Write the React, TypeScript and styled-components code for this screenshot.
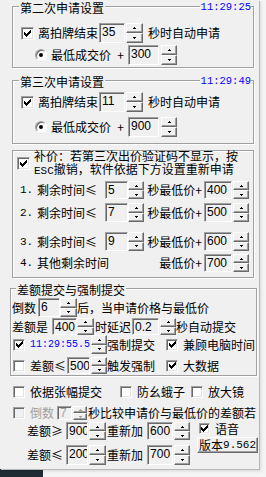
import React from "react";
import styled, { createGlobalStyle } from "styled-components";

const GlobalStyle = createGlobalStyle`
  html, body {
    margin: 0;
    padding: 0;
  }
  body {
    width: 266px;
    height: 477px;
    overflow: hidden;
    background: #f4f4f4;
    color: #000;
    font-family: "Noto Sans CJK SC", "Noto Sans", sans-serif;
    font-size: 12px;
  }
`;

const Screen = styled.div`
  width: 266px;
  height: 477px;
  display: flex;
  flex-direction: column;
`;

const TopArea = styled.div`
  display: flex;
  height: 469px;
`;

const Window = styled.div`
  position: relative;
  z-index: 1;
  width: 259px;
  height: 469px;
  background: #f0f0f0;
  box-shadow: 1px 1px 0 #b9b9b9, 2px 2px 3px rgba(0, 0, 0, 0.12);
  display: flex;
  flex-direction: column;
`;

const Backdrop = styled.div`
  flex: 1;
  background: #f4f4f4;
`;

const BottomArea = styled.div`
  flex: 1;
  display: flex;
`;

const Taskbar = styled.div`
  width: 43px;
  background: #1f2c34;
`;

const Group = styled.div<{ $mt: number; $ml: number; $mr: number; $pb: number }>`
  margin: ${p => p.$mt}px ${p => p.$mr}px 0 ${p => p.$ml}px;
  padding-bottom: ${p => p.$pb}px;
  border: 1px solid #a0a0a0;
  box-shadow: inset 1px 1px 0 #fff, 1px 1px 0 #fff;
  display: flex;
  flex-direction: column;
`;

// legend strip: sits on the top border line
const GroupHeader = styled.div<{ $ml: number }>`
  display: flex;
  align-items: center;
  height: 13px;
  margin: -6px 2px 0 ${p => p.$ml}px;
`;

const GroupTitle = styled.span`
  background: #f0f0f0;
  padding: 0 1px;
  line-height: 13px;
  white-space: nowrap;
`;

const HeaderClock = styled.span`
  margin-left: auto;
  padding-left: 1px;
  background: #f0f0f0;
  color: #0000ff;
  font-family: "Liberation Mono", monospace;
  font-size: 10.5px;
  line-height: 13px;
`;

const Row = styled.div<{ $mt?: number; $h: number; $pl?: number }>`
  display: flex;
  align-items: center;
  height: ${p => p.$h}px;
  margin-top: ${p => p.$mt ?? 0}px;
  padding-left: ${p => p.$pl ?? 0}px;
`;

const Text = styled.span<{ $ml?: number; $disabled?: boolean }>`
  margin-left: ${p => p.$ml ?? 0}px;
  line-height: 14px;
  white-space: nowrap;
  color: ${p => (p.$disabled ? "#a0a0a0" : "#000")};
`;

const Mono = styled.span`
  font-family: "Liberation Mono", monospace;
  font-size: 11px;
  line-height: 1;
`;

const Plus = styled.span<{ $ml: number }>`
  width: 11px;
  margin-left: ${p => p.$ml}px;
  text-align: center;
  line-height: 14px;
`;

const Clock = styled.span<{ $ml: number }>`
  margin-left: ${p => p.$ml}px;
  color: #0000ff;
  font-family: "Liberation Mono", monospace;
  font-size: 10px;
  line-height: 14px;
`;

/* classic sunken check box */
const CheckFrame = styled.span<{ $size: number; $ml: number; $disabled?: boolean }>`
  flex: none;
  width: ${p => p.$size}px;
  height: ${p => p.$size}px;
  margin-left: ${p => p.$ml}px;
  box-sizing: border-box;
  border: 1px solid;
  border-color: #a0a0a0 #fff #fff #a0a0a0;
  box-shadow: inset 1px 1px 0 #696969, inset -1px -1px 0 #e3e3e3;
  background: ${p => (p.$disabled ? "#f0f0f0" : "#fff")};
  display: inline-flex;
  align-items: center;
  justify-content: center;
`;

const CHECK_PATH =
  "M6 0h1v1h-1z M5 1h2v1h-2z M0 2h1v1h-1z M4 2h3v1h-3z M0 3h2v1h-2z M3 3h3v1h-3z M0 4h5v1h-5z M1 5h3v1h-3z M2 6h1v1h-1z";

const CheckBox = ({
  checked,
  size = 12,
  ml = 0,
  disabled,
}: {
  checked?: boolean;
  size?: number;
  ml?: number;
  disabled?: boolean;
}) => (
  <CheckFrame $size={size} $ml={ml} $disabled={disabled}>
    {checked && (
      <svg width="7" height="7" viewBox="0 0 7 7" shapeRendering="crispEdges">
        <path d={CHECK_PATH} fill="#000" />
      </svg>
    )}
  </CheckFrame>
);

const RadioFrame = styled.span`
  flex: none;
  width: 12px;
  height: 12px;
  box-sizing: border-box;
  border-radius: 50%;
  border: 1px solid;
  border-color: #a0a0a0 #fff #fff #a0a0a0;
  box-shadow: inset 1px 1px 0 #696969;
  background: #fff;
  display: inline-flex;
  align-items: center;
  justify-content: center;
`;

const RadioDot = styled.span`
  width: 4px;
  height: 4px;
  border-radius: 50%;
  background: #000;
`;

/* spin edit: sunken number box + up/down buttons */
const SpinWrap = styled.div<{ $ml: number; $h: number; $gap: number }>`
  display: flex;
  flex: none;
  height: ${p => p.$h}px;
  margin-left: ${p => p.$ml}px;
  gap: ${p => p.$gap}px;
`;

const NumBox = styled.div<{ $w: number; $compact?: boolean; $disabled?: boolean }>`
  width: ${p => p.$w}px;
  height: 100%;
  box-sizing: border-box;
  border: 1px solid;
  border-color: #a0a0a0 #fff #fff #a0a0a0;
  box-shadow: inset 1px 1px 0 #696969;
  background: #f0f0f0;
  padding: ${p => (p.$compact ? "0 0 0 2px" : "1px 0 0 2px")};
  font-family: "Liberation Sans", Arial, sans-serif;
  font-size: 12px;
  line-height: ${p => (p.$compact ? 12 : 14)}px;
  color: ${p => (p.$disabled ? "#a0a0a0" : "#000")};
  overflow: hidden;
  white-space: nowrap;
`;

const SpinButtons = styled.div<{ $w: number }>`
  width: ${p => p.$w}px;
  height: 100%;
  display: flex;
  flex-direction: column;
`;

const SpinButton = styled.div`
  flex: 1;
  box-sizing: border-box;
  border: 1px solid;
  border-color: #fff #696969 #696969 #fff;
  box-shadow: inset -1px -1px 0 #a0a0a0;
  background: #f0f0f0;
  display: flex;
  align-items: center;
  justify-content: center;
`;

const Arrow = ({ down, color }: { down?: boolean; color: string }) => (
  <svg width="3" height="2" viewBox="0 0 3 2" shapeRendering="crispEdges">
    <path d={down ? "M0 0h3v1H0z M1 1h1v1H1z" : "M1 0h1v1H1z M0 1h3v1H0z"} fill={color} />
  </svg>
);

type SpinProps = {
  value?: string;
  w?: number;
  h: number;
  bw?: number;
  gap?: number;
  ml?: number;
  disabled?: boolean;
};

const Spin = ({ value, w = 0, h, bw = 16, gap = 1, ml = 0, disabled }: SpinProps) => {
  const arrow = disabled ? "#a0a0a0" : "#000";
  return (
    <SpinWrap $ml={ml} $h={h} $gap={gap}>
      {value !== undefined && (
        <NumBox $w={w} $compact={h < 16} $disabled={disabled}>
          {value}
        </NumBox>
      )}
      <SpinButtons $w={bw}>
        <SpinButton>
          <Arrow color={arrow} />
        </SpinButton>
        <SpinButton>
          <Arrow down color={arrow} />
        </SpinButton>
      </SpinButtons>
    </SpinWrap>
  );
};

/* 补价 group */
const NoticeRow = styled.div`
  display: flex;
  align-items: center;
  height: 25px;
  padding-left: 4px;
`;

const Notice = styled.div`
  margin-left: 4px;
  line-height: 12.5px;
  white-space: nowrap;
`;

const TierRow = styled.div<{ $mt: number; $h: number }>`
  display: grid;
  grid-template-columns: 17px 68px 39px 58px 47px;
  align-items: center;
  height: ${p => p.$h}px;
  margin-top: ${p => p.$mt}px;
  padding-left: 7px;
`;

const TierNo = styled.span`
  font-family: "Liberation Mono", monospace;
  font-size: 11px;
  line-height: 14px;
`;

const TierLabel = styled.span<{ $span?: number }>`
  grid-column: span ${p => p.$span ?? 1};
  line-height: 14px;
  white-space: nowrap;
`;

const PriceLabel = styled.span`
  grid-column: 4;
  text-align: right;
  line-height: 14px;
  white-space: nowrap;
`;

/* bottom block */
const BottomBlock = styled.div`
  display: flex;
  margin-top: 2px;
  padding-left: 27px;
`;

const AdjustColumn = styled.div`
  display: flex;
  flex-direction: column;
`;

const SideColumn = styled.div`
  display: flex;
  flex-direction: column;
  margin-left: 7px;
`;

const VoiceRow = styled.div`
  display: flex;
  align-items: center;
  height: 11px;
  margin-top: 1px;
`;

const VersionButton = styled.div`
  width: 61px;
  height: 16px;
  margin-top: 3px;
  box-sizing: border-box;
  border: 1px solid;
  border-color: #fff #696969 #696969 #fff;
  box-shadow: inset -1px -1px 0 #a0a0a0;
  background: #f0f0f0;
  display: flex;
  align-items: center;
  justify-content: center;
  line-height: 14px;
  white-space: nowrap;
`;

const BidSettings = ({
  title,
  clock,
  seconds,
  plus,
  mt,
  firstMt,
  secondMt,
  pb,
}: {
  title: string;
  clock: string;
  seconds: string;
  plus: string;
  mt: number;
  firstMt: number;
  secondMt: number;
  pb: number;
}) => (
  <Group $mt={mt} $ml={12} $mr={5} $pb={pb}>
    <GroupHeader $ml={6}>
      <GroupTitle>{title}</GroupTitle>
      <HeaderClock>{clock}</HeaderClock>
    </GroupHeader>
    <Row $mt={firstMt} $h={20} $pl={8}>
      <CheckBox checked size={13} />
      <Text $ml={4}>离拍牌结束</Text>
      <Spin value={seconds} w={26} h={20} bw={17} ml={1} />
      <Text $ml={5}>秒时自动申请</Text>
    </Row>
    <Row $mt={secondMt} $h={20} $pl={22}>
      <RadioFrame>
        <RadioDot />
      </RadioFrame>
      <Text $ml={4}>最低成交价</Text>
      <Plus $ml={4}>+</Plus>
      <Spin value={plus} w={31} h={20} bw={16} gap={2} ml={2} />
    </Row>
  </Group>
);

const tiers = [
  { no: "1.", secs: "5", price: "400", mt: 5, h: 18 },
  { no: "2.", secs: "7", price: "500", mt: 4, h: 19 },
  { no: "3.", secs: "9", price: "600", mt: 10, h: 19 },
];

export default function App() {
  return (
    <>
      <GlobalStyle />
      <Screen>
        <TopArea>
          <Window>
            <BidSettings
              title="第二次申请设置"
              clock="11:29:25"
              seconds="35"
              plus="300"
              mt={6}
              firstMt={9}
              secondMt={2}
              pb={2}
            />
            <BidSettings
              title="第三次申请设置"
              clock="11:29:49"
              seconds="11"
              plus="900"
              mt={12}
              firstMt={4}
              secondMt={5}
              pb={6}
            />

            <Group $mt={6} $ml={12} $mr={5} $pb={5}>
              <NoticeRow>
                <CheckBox checked size={13} />
                <Notice>
                  补价：若第三次出价验证码不显示，按
                  <br />
                  <Mono>ESC</Mono>撤销，软件依据下方设置重新申请
                </Notice>
              </NoticeRow>
              {tiers.map(t => (
                <TierRow key={t.no} $mt={t.mt} $h={t.h}>
                  <TierNo>{t.no}</TierNo>
                  <TierLabel>剩余时间≤</TierLabel>
                  <Spin value={t.secs} w={23} h={t.h} bw={16} gap={0} />
                  <PriceLabel>秒最低价+</PriceLabel>
                  <Spin value={t.price} w={28} h={t.h} bw={16} ml={2} />
                </TierRow>
              ))}
              <TierRow $mt={3} $h={18}>
                <TierNo>4.</TierNo>
                <TierLabel $span={2}>其他剩余时间</TierLabel>
                <PriceLabel>最低价+</PriceLabel>
                <Spin value="700" w={28} h={18} bw={16} ml={2} />
              </TierRow>
            </Group>

            <Group $mt={10} $ml={10} $mr={2} $pb={1}>
              <GroupHeader $ml={5}>
                <GroupTitle>差额提交与强制提交</GroupTitle>
              </GroupHeader>
              <Row $mt={2} $h={19} $pl={1}>
                <Text>倒数</Text>
                <Spin value="6" w={22} h={19} bw={17} gap={0} ml={2} />
                <Text>后，当申请价格与最低价</Text>
              </Row>
              <Row $mt={1} $h={17} $pl={1}>
                <Text>差额是</Text>
                <Spin value="400" w={25} h={17} bw={17} gap={0} ml={4} />
                <Text $ml={1}>时延迟</Text>
                <Spin value="0.2" w={27} h={17} bw={16} ml={1} />
                <Text>秒自动提交</Text>
              </Row>
              <Row $h={19} $pl={2}>
                <CheckBox checked />
                <Clock $ml={5}>11:29:55.5</Clock>
                <Spin h={19} bw={16} ml={1} />
                <Text>强制提交</Text>
                <CheckBox checked ml={11} />
                <Text $ml={5}>兼顾电脑时间</Text>
              </Row>
              <Row $mt={3} $h={17} $pl={2}>
                <CheckBox />
                <Text $ml={5}>差额≤</Text>
                <Spin value="500" w={23} h={17} bw={16} ml={1} />
                <Text>触发强制</Text>
                <CheckBox checked ml={11} />
                <Text $ml={5}>大数据</Text>
              </Row>
            </Group>

            <Row $mt={9} $h={13} $pl={13}>
              <CheckBox />
              <Text $ml={5}>依据张幅提交</Text>
              <CheckBox ml={18} />
              <Text $ml={5}>防幺蛾子</Text>
              <CheckBox ml={6} />
              <Text $ml={5}>放大镜</Text>
            </Row>
            <Row $mt={8} $h={14} $pl={13}>
              <CheckBox disabled />
              <Text $ml={5} $disabled>
                倒数
              </Text>
              <Spin value="7" w={15} h={14} bw={14} ml={3} disabled />
              <Text $ml={1}>秒比较申请价与最低价的差额若</Text>
            </Row>

            <BottomBlock>
              <AdjustColumn>
                <Row $h={18}>
                  <Text>差额≥</Text>
                  <Spin value="900" w={22} h={18} bw={17} ml={3} />
                  <Text $ml={1}>重新加</Text>
                  <Spin value="600" w={26} h={18} bw={16} ml={4} />
                </Row>
                <Row $mt={5} $h={20}>
                  <Text>差额≤</Text>
                  <Spin value="200" w={22} h={20} bw={17} ml={3} />
                  <Text $ml={1}>重新加</Text>
                  <Spin value="700" w={26} h={20} bw={16} ml={4} />
                </Row>
              </AdjustColumn>
              <SideColumn>
                <VoiceRow>
                  <CheckBox checked size={11} ml={2} />
                  <Text $ml={5}>语音</Text>
                </VoiceRow>
                <VersionButton>
                  版本<Mono>9.562</Mono>
                </VersionButton>
              </SideColumn>
            </BottomBlock>
          </Window>
          <Backdrop />
        </TopArea>
        <BottomArea>
          <Taskbar />
        </BottomArea>
      </Screen>
    </>
  );
}
